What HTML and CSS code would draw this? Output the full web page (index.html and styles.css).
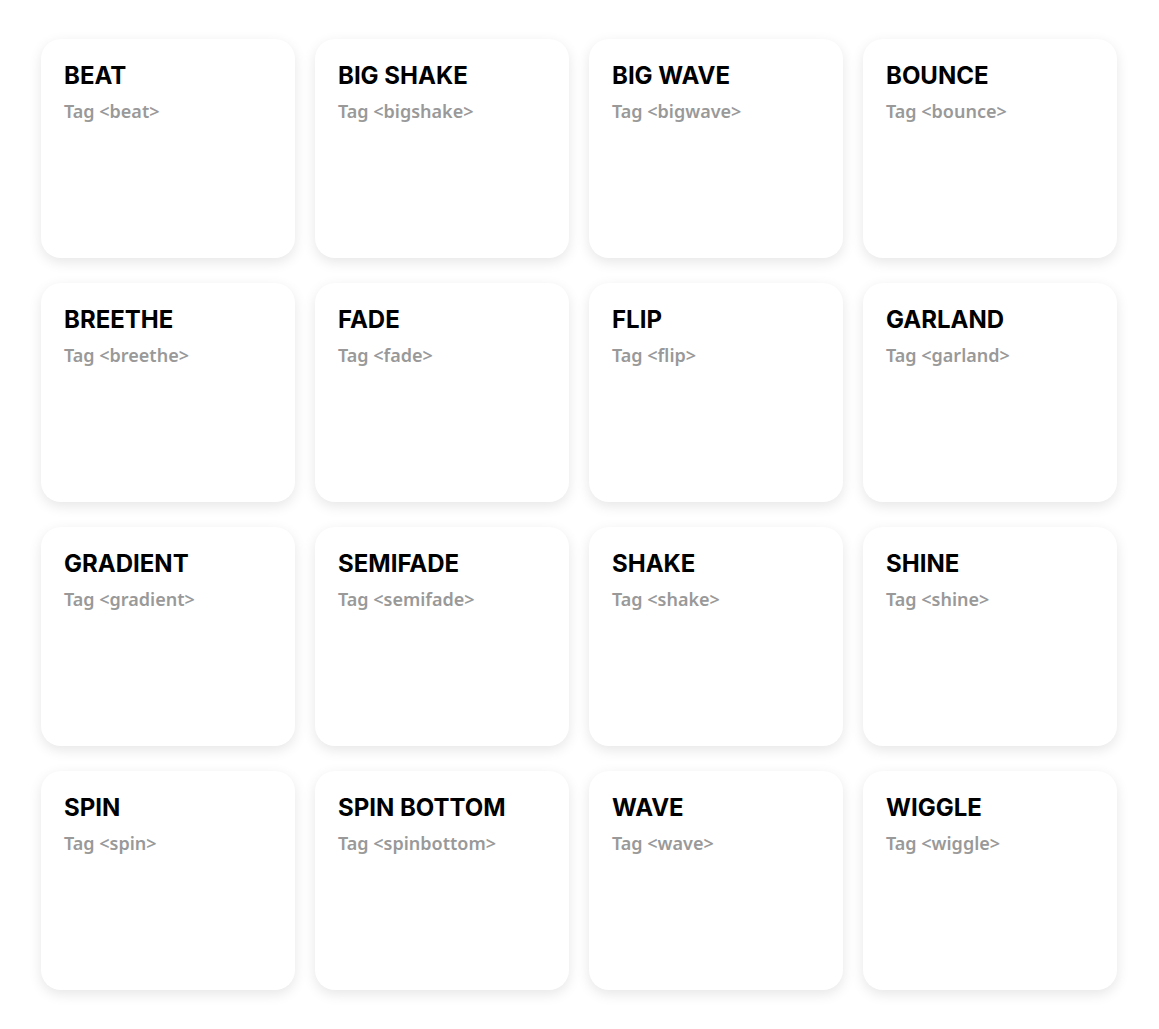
FILE: index.html
```html
<!DOCTYPE html>
<html>
<head>
<meta charset="utf-8">
<link rel="stylesheet" href="styles.css">
</head>
<body>
<main class="grid">
  <div class="card"><h2 class="title">BEAT</h2><p class="tag">Tag &lt;beat&gt;</p></div>
  <div class="card"><h2 class="title">BIG SHAKE</h2><p class="tag">Tag &lt;bigshake&gt;</p></div>
  <div class="card"><h2 class="title">BIG WAVE</h2><p class="tag">Tag &lt;bigwave&gt;</p></div>
  <div class="card"><h2 class="title">BOUNCE</h2><p class="tag">Tag &lt;bounce&gt;</p></div>
  <div class="card"><h2 class="title">BREETHE</h2><p class="tag">Tag &lt;breethe&gt;</p></div>
  <div class="card"><h2 class="title">FADE</h2><p class="tag">Tag &lt;fade&gt;</p></div>
  <div class="card"><h2 class="title">FLIP</h2><p class="tag">Tag &lt;flip&gt;</p></div>
  <div class="card"><h2 class="title">GARLAND</h2><p class="tag">Tag &lt;garland&gt;</p></div>
  <div class="card"><h2 class="title">GRADIENT</h2><p class="tag">Tag &lt;gradient&gt;</p></div>
  <div class="card"><h2 class="title">SEMIFADE</h2><p class="tag">Tag &lt;semifade&gt;</p></div>
  <div class="card"><h2 class="title">SHAKE</h2><p class="tag">Tag &lt;shake&gt;</p></div>
  <div class="card"><h2 class="title">SHINE</h2><p class="tag">Tag &lt;shine&gt;</p></div>
  <div class="card"><h2 class="title">SPIN</h2><p class="tag">Tag &lt;spin&gt;</p></div>
  <div class="card"><h2 class="title">SPIN BOTTOM</h2><p class="tag">Tag &lt;spinbottom&gt;</p></div>
  <div class="card"><h2 class="title">WAVE</h2><p class="tag">Tag &lt;wave&gt;</p></div>
  <div class="card"><h2 class="title">WIGGLE</h2><p class="tag">Tag &lt;wiggle&gt;</p></div>
</main>
</body>
</html>
```
FILE: styles.css
```css
html, body {
  margin: 0;
  padding: 0;
  background: #ffffff;
}
body {
  font-family: "Noto Sans", "DejaVu Sans", sans-serif;
}
.grid {
  display: grid;
  grid-template-columns: repeat(4, 254px);
  grid-auto-rows: 219px;
  column-gap: 20px;
  row-gap: 25px;
  justify-content: start;
  padding: 39px 0 40px 41px;
}
.card {
  background: #fff;
  border-radius: 20px;
  box-shadow: 0 4px 13px rgba(0, 0, 0, 0.1);
  padding: 22px 23px;
  box-sizing: border-box;
}
.title {
  margin: 0;
  font-family: Inter, "Noto Sans", sans-serif;
  font-weight: 700;
  font-size: 24px;
  line-height: 30px;
  color: #000;
}
.tag {
  margin: 8px 0 0;
  font-family: "Noto Sans", sans-serif;
  font-weight: 600;
  font-size: 18px;
  line-height: 24px;
  color: #999;
}
```
